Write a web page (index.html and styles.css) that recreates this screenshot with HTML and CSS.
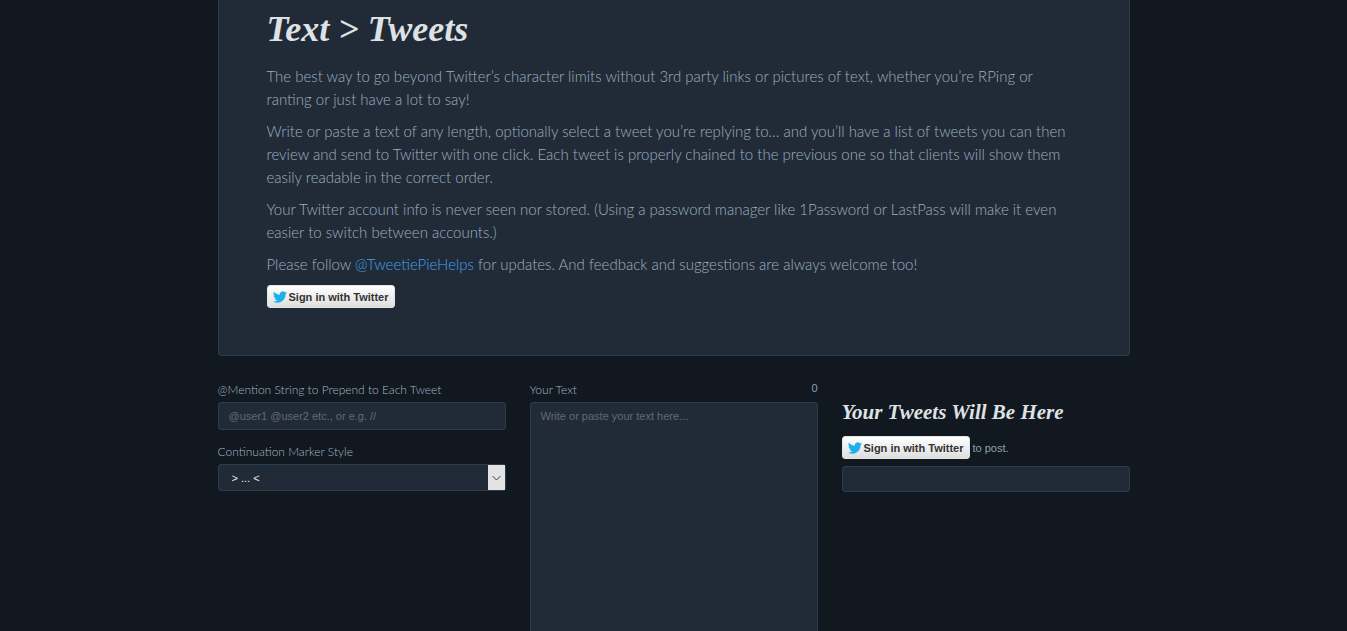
FILE: index.html
```html
<!DOCTYPE html>
<html lang="en">
<head>
<meta charset="utf-8">
<meta name="viewport" content="width=device-width, initial-scale=1">
<title>Text &gt; Tweets</title>
<link rel="stylesheet" href="styles.css">
</head>
<body>
<svg class="sprite" aria-hidden="true">
  <symbol id="bird" viewBox="0 0 24 24">
    <path d="M23.95 4.57a10 10 0 0 1-2.82.77 4.96 4.96 0 0 0 2.16-2.72c-.95.55-2 .96-3.13 1.18a4.92 4.92 0 0 0-8.38 4.48C7.69 8.1 4.07 6.13 1.64 3.16a4.93 4.93 0 0 0 1.52 6.57 4.9 4.9 0 0 1-2.23-.61v.06a4.92 4.92 0 0 0 3.95 4.83 5 5 0 0 1-2.21.08 4.94 4.94 0 0 0 4.6 3.42A9.87 9.87 0 0 1 0 19.54a13.99 13.99 0 0 0 7.55 2.21c9.05 0 14-7.5 14-13.98 0-.21 0-.42-.02-.63a9.94 9.94 0 0 0 2.42-2.57z"/>
  </symbol>
</svg>
<main class="page">
  <section class="intro">
    <h1 class="title">Text &gt; Tweets</h1>
    <p>The best way to go beyond Twitter’s character limits without 3rd party links or pictures of text, whether you’re RPing or<br>ranting or just have a lot to say!</p>
    <p>Write or paste a text of any length, optionally select a tweet you’re replying to… and you’ll have a list of tweets you can then<br>review and send to Twitter with one click. Each tweet is properly chained to the previous one so that clients will show them<br>easily readable in the correct order.</p>
    <p>Your Twitter account info is never seen nor stored. (Using a password manager like 1Password or LastPass will make it even<br>easier to switch between accounts.)</p>
    <p>Please follow <a class="link" href="#">@TweetiePieHelps</a> for updates. And feedback and suggestions are always welcome too!</p>
    <button class="signin" type="button"><svg class="bird"><use href="#bird"/></svg>Sign in with Twitter</button>
  </section>
  <div class="columns">
    <section class="column">
      <label class="label" for="mention">@Mention String to Prepend to Each Tweet</label>
      <input class="field" id="mention" type="text" placeholder="@user1 @user2 etc., or e.g. //">
      <label class="label label-next" for="marker">Continuation Marker Style</label>
      <div class="select-wrap">
        <select class="select" id="marker"><option>&gt; ... &lt;</option></select>
        <svg class="arrow" viewBox="0 0 17 25" aria-hidden="true"><path d="M4.500 11l4 4 4-4"/></svg>
      </div>
    </section>
    <section class="column">
      <div class="label-row">
        <label class="label" for="text">Your Text</label>
        <span class="count">0</span>
      </div>
      <textarea class="field area" id="text" placeholder="Write or paste your text here..."></textarea>
    </section>
    <section class="column results">
      <h2 class="subtitle">Your Tweets Will Be Here</h2>
      <div class="post-row">
        <button class="signin" type="button"><svg class="bird"><use href="#bird"/></svg>Sign in with Twitter</button>
        <span>to post.</span>
      </div>
      <div class="tweets"></div>
    </section>
  </div>
</main>
</body>
</html>
```
FILE: styles.css
```css
* { box-sizing: border-box; }

body {
  margin: 0;
  height: 100vh;
  overflow: hidden;
  background: #11181f;
  color: #8fa2b1;
  font-family: "Liberation Sans", Arial, sans-serif;
  font-size: 11px;
}

.sprite { display: none; }

.page {
  max-width: 912px;
  margin: 0 auto;
}

.intro {
  padding: 4px 48px 47px;
  background: #212b38;
  border: 1px solid #2c3d50;
  border-top: 0;
  border-radius: 0 0 4px 4px;
  color: #9cb0c0;
  font-family: Lato, sans-serif;
  font-size: 15px;
  font-weight: 300;
  line-height: 23px;
}

.intro p {
  margin: 0 0 9px;
  white-space: nowrap;
}

.title,
.subtitle {
  margin: 0;
  color: #dfe2e4;
  font-family: "Liberation Serif", serif;
  font-style: italic;
  font-weight: 700;
}

.title {
  margin-bottom: 11px;
  font-size: 36px;
  line-height: 50px;
}

.subtitle {
  margin-bottom: 12px;
  font-size: 21px;
  line-height: 24px;
}

.link {
  color: #42a0ec;
  text-decoration: none;
}

.signin {
  display: flex;
  align-items: center;
  gap: 2px;
  height: 23px;
  padding: 0 5px;
  border: 1px solid #e4e4e4;
  border-radius: 3px;
  background: linear-gradient(#ffffff, #dedede);
  color: #333333;
  font: bold 11px "Liberation Sans", Arial, sans-serif;
  white-space: nowrap;
}

.bird {
  width: 14px;
  height: 14px;
  fill: #1fb0ea;
}

.columns {
  display: grid;
  grid-template-columns: repeat(3, 1fr);
  gap: 24px;
  padding-top: 24px;
}

.label {
  display: block;
  height: 22px;
  color: #a3b6c6;
  font-family: Lato, sans-serif;
  font-size: 12px;
  font-weight: 300;
  line-height: 20px;
}

.label-next { margin-top: 12px; }

.label-row {
  display: flex;
  justify-content: space-between;
}

.count {
  line-height: 17px;
}

.field,
.select,
.tweets {
  display: block;
  width: 100%;
  border: 1px solid #2c3d50;
  border-radius: 3px;
  background: #212b38;
  color: #e6e9ec;
  font: 11px "Liberation Sans", Arial, sans-serif;
}

.field {
  height: 28px;
  padding: 0 10px;
}

.field::placeholder { color: #63696f; }

.area {
  height: 288px;
  padding: 7px 10px;
  resize: none;
}

.select-wrap { position: relative; }

.select {
  height: 27px;
  padding: 0 13px;
  appearance: none;
}

.arrow {
  position: absolute;
  top: 1px;
  right: 1px;
  width: 17px;
  height: 25px;
  background: #e3e3e3;
  fill: none;
  stroke: #404040;
  pointer-events: none;
}

.results { padding-top: 20px; }

.post-row {
  display: flex;
  align-items: center;
  gap: 3px;
  margin-bottom: 7px;
}

.tweets { height: 26px; }
```
